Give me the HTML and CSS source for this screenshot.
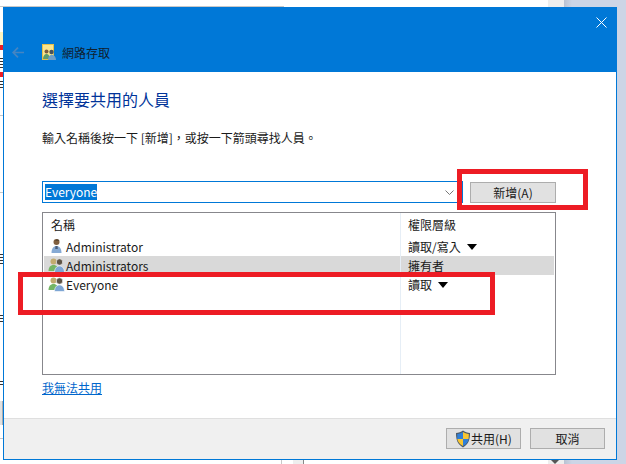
FILE: index.html
```html
<!DOCTYPE html>
<html lang="zh-Hant">
<head>
  <meta charset="UTF-8">
  <title>網路存取</title>
  <link rel="stylesheet" href="styles.css">
</head>
<body>
  <!-- bits of the window behind the dialog -->
  <div class="bg bg-topline"></div>
  <div class="bg bg-scroll"></div>
  <div class="bg bg-shadow"></div>
  <div class="bg bg-side"></div>
  <div class="bg bg-yellow"></div>
  <div class="bg bg-red-a"></div>
  <div class="bg bg-red-b"></div>
  <div class="bg bg-line-a"></div>
  <div class="bg bg-line-b"></div>
  <div class="bg bg-line-c"></div>
  <div class="bg bg-box"></div>
  <div class="bg bg-rule"></div>
  <div class="bg bg-cell"></div>
  <div class="bg bg-sliver sliver-a"></div>
  <div class="bg bg-sliver sliver-b"></div>
  <div class="bg bg-sliver sliver-c"></div>
  <div class="bg bg-sliver sliver-d"></div>
  <div class="bg bg-sliver sliver-e"></div>
  <svg class="bg-arrow" width="8" height="4" viewBox="0 0 8 4"><path d="M0 0h8L4 4z" fill="#555"/></svg>

  <div class="dialog">
    <header class="dialog-head">
      <div class="close-row">
        <svg width="11" height="11" viewBox="0 0 11 11"><path d="M.5.5l10 10M10.500.5l-10 10" stroke="#fff" fill="none"/></svg>
      </div>
      <div class="title-row">
        <svg class="back-icon" width="12" height="11" viewBox="0 0 12 11"><path d="M6 .7L1.200 5.500 6 10.300M1.500 5.500H12" stroke="#4585c2" stroke-width="1.700" fill="none"/></svg>
        <svg class="app-icon" width="14" height="16" viewBox="0 0 14 16">
          <rect x=".5" y=".5" width="11" height="15" fill="#fae58e" stroke="#e6c04a"/>
          <circle cx="4.500" cy="7.500" r="2" fill="#7c5b3e"/>
          <path d="M1 15c0-3 1.500-5 3.500-5S8 12 8 15z" fill="#5d9c6c"/>
          <circle cx="9.500" cy="8" r="2.200" fill="#47525e"/>
          <path d="M6 16c0-3 1.500-5.300 3.800-5.300S14 13 14 16z" fill="#6e9ec8"/>
        </svg>
        <span class="dialog-title">網路存取</span>
      </div>
    </header>

    <main class="dialog-body">
      <h1 class="heading">選擇要共用的人員</h1>
      <p class="hint">輸入名稱後按一下 [新增]，或按一下箭頭尋找人員。</p>

      <div class="add-row">
        <div class="combo">
          <span class="combo-value">Everyone</span>
          <svg width="9" height="5" viewBox="0 0 9 5"><path d="M.5.500l4 4 4-4" stroke="#777" fill="none"/></svg>
        </div>
        <button class="btn btn-add">新增(A)</button>
      </div>

      <div class="list">
        <div class="list-row list-head">
          <div class="col-name">名稱</div>
          <div class="col-perm">權限層級</div>
        </div>
        <div class="list-row">
          <div class="col-name">
            <svg class="user-icon" width="18" height="16" viewBox="0 0 18 16">
              <circle cx="8.500" cy="4" r="3" fill="#80603f"/>
              <path d="M7 2.500c1-1.500 3.500-1.500 4.500 0z" fill="#3d3226"/>
              <path d="M3.500 15c0-4.500 2.200-7 5-7s5 2.500 5 7z" fill="#86aad4"/>
              <path d="M7.500 8h2l.3 3h-2.600z" fill="#4a5d78"/>
            </svg>
            Administrator
          </div>
          <div class="col-perm">讀取/寫入<span class="caret"></span></div>
        </div>
        <div class="list-row is-selected">
          <div class="col-name">
            <svg class="user-icon" width="18" height="16" viewBox="0 0 18 16">
              <circle cx="5.500" cy="4.500" r="3" fill="#c2ab6e"/>
              <path d="M.5 14c0-3.700 2-6 5-6s5 2.300 5 6z" fill="#74b565"/>
              <circle cx="11.500" cy="5" r="3.200" fill="#5e5446" stroke="#fff" stroke-width=".6"/>
              <path d="M6.500 15.500c0-4 2.200-6.500 5-6.500s5 2.500 5 6.500z" fill="#7ea6d4" stroke="#fff" stroke-width=".6"/>
            </svg>
            Administrators
          </div>
          <div class="col-perm">擁有者</div>
        </div>
        <div class="list-row">
          <div class="col-name">
            <svg class="user-icon" width="18" height="16" viewBox="0 0 18 16">
              <circle cx="5.500" cy="4.500" r="3" fill="#c2ab6e"/>
              <path d="M.5 14c0-3.700 2-6 5-6s5 2.300 5 6z" fill="#74b565"/>
              <circle cx="11.500" cy="5" r="3.200" fill="#5e5446" stroke="#fff" stroke-width=".6"/>
              <path d="M6.500 15.500c0-4 2.200-6.500 5-6.500s5 2.500 5 6.500z" fill="#7ea6d4" stroke="#fff" stroke-width=".6"/>
            </svg>
            Everyone
          </div>
          <div class="col-perm">讀取<span class="caret"></span></div>
        </div>
        <div class="col-line"></div>
      </div>

      <a class="link" href="#">我無法共用</a>
    </main>

    <footer class="dialog-foot">
      <button class="btn btn-foot">
        <svg width="16" height="18" viewBox="0 0 16 18">
          <path d="M8 .5C6 2 3.500 3 1 3c0 6 1 11 7 14.500C14 14 15 9 15 3 12.500 3 10 2 8 .5z" fill="#4c5a68"/>
          <path d="M8 2v7H2.200c.1-1.800 0-3.400 0-5C4.500 3.800 6.300 3.100 8 2z" fill="#2f7fd8"/>
          <path d="M8 2c1.700 1.100 3.500 1.800 5.800 2 0 1.600 0 3.200-.2 5H8z" fill="#f7c531"/>
          <path d="M8 9H2.300c.5 2.800 2 4.900 5.700 7z" fill="#f7c531"/>
          <path d="M8 9h5.700c-.5 2.800-2 4.900-5.700 7z" fill="#2f7fd8"/>
        </svg>
        共用(H)
      </button>
      <button class="btn btn-foot">取消</button>
    </footer>
  </div>

  <div class="mark mark-add"></div>
  <div class="mark mark-row"></div>
</body>
</html>
```

FILE: styles.css
```css
html, body {
  margin: 0;
  padding: 0;
}

body {
  position: relative;
  width: 626px;
  height: 464px;
  overflow: hidden;
  background: #fff;
  font-family: "Noto Sans CJK TC", "Open Sans", sans-serif;
  font-size: 12px;
  color: #1a1a1a;
}

/* window behind the dialog */
.bg {
  position: absolute;
}

.bg-topline {
  left: 0;
  top: 6px;
  width: 284px;
  height: 1px;
  background: #c8c8c8;
}

.bg-scroll {
  left: 548px;
  top: 0;
  width: 16px;
  height: 464px;
  background: #eee;
}

.bg-shadow {
  left: 564px;
  top: 0;
  width: 8px;
  height: 464px;
  background: linear-gradient(to right, #b9c2d2, #ccd5e6);
}

.bg-side {
  left: 572px;
  top: 0;
  width: 54px;
  height: 464px;
  background: #ccd5e6;
}

.bg-yellow {
  left: 0;
  top: 32px;
  width: 3px;
  height: 13px;
  background: #fdf3c0;
}

.bg-red-a,
.bg-red-b {
  left: 0;
  width: 3px;
  height: 5px;
  background: #ed1c24;
}

.bg-red-a {
  top: 45px;
}

.bg-red-b {
  top: 72px;
}

.bg-line-a,
.bg-line-b,
.bg-line-c {
  left: 0;
  width: 3px;
  height: 1px;
  background: #c8c8c8;
}

.bg-line-a {
  top: 115px;
}

.bg-line-b {
  top: 192px;
}

.bg-line-c {
  top: 438px;
}

.bg-box {
  left: 0;
  top: 401px;
  width: 2px;
  height: 24px;
  background: #e1e1e1;
  border-right: 1px solid #adadad;
}

.bg-rule {
  left: 281px;
  top: 460px;
  width: 1px;
  height: 4px;
  background: #c8c8c8;
}

.bg-cell {
  left: 293px;
  top: 460px;
  width: 10px;
  height: 4px;
  background: #eee;
  border-right: 1px solid #888;
}

.bg-arrow {
  position: absolute;
  left: 551px;
  top: 460px;
}

/* cut-off writing of the window behind, too little shows to read it */
.bg-sliver {
  left: 0;
  width: 3px;
  background: repeating-linear-gradient(to bottom, #333 0, #333 1px, #fff 1px, #fff 3px);
}

.sliver-a {
  top: 58px;
  height: 12px;
}

.sliver-b {
  top: 81px;
  height: 7px;
}

.sliver-c {
  top: 254px;
  height: 11px;
}

.sliver-d {
  top: 315px;
  height: 9px;
}

.sliver-e {
  top: 381px;
  height: 6px;
}

/* dialog */
.dialog {
  position: absolute;
  left: 3px;
  top: 7px;
  width: 612px;
  height: 451px;
  display: flex;
  flex-direction: column;
  border: 1px solid #0078d7;
  background: #fff;
}

.dialog-head {
  height: 64px;
  background: #0078d7;
  flex-shrink: 0;
}

.close-row {
  display: flex;
  justify-content: flex-end;
  padding: 9px 9px 0 0;
  height: 19px;
}

.title-row {
  display: flex;
  align-items: center;
  height: 24px;
  margin-top: 4px;
  padding-left: 8px;
}

.back-icon {
  margin-right: 18px;
}

.app-icon {
  margin-right: 6px;
}

.dialog-title {
  font-size: 12px;
  color: #10202e;
}

.dialog-body {
  flex: 1;
  padding: 0 59px 0 38px;
  display: flex;
  flex-direction: column;
}

.heading {
  margin: 16px 0 0;
  font-size: 16px;
  font-weight: 400;
  line-height: 22px;
  color: #003399;
}

.hint {
  margin: 19px 0 0;
  line-height: 18px;
}

.add-row {
  display: flex;
  gap: 7px;
  margin-top: 34px;
}

.combo {
  box-sizing: border-box;
  width: 421px;
  height: 22px;
  display: flex;
  align-items: center;
  justify-content: space-between;
  padding: 0 8px 0 2px;
  border: 1px solid #0078d7;
}

.combo-value {
  background: #0078d7;
  color: #fff;
  line-height: 16px;
}

.btn {
  box-sizing: border-box;
  height: 21px;
  padding: 0;
  border: 1px solid #adadad;
  background: #e1e1e1;
  font-family: inherit;
  font-size: 12px;
  color: #1a1a1a;
}

.btn-add {
  width: 86px;
  margin-top: 1px;
}

.list {
  position: relative;
  box-sizing: border-box;
  width: 514px;
  height: 163px;
  margin-top: 9px;
  padding: 1px;
  border: 1px solid #87878c;
}

.list-row {
  box-sizing: border-box;
  display: flex;
  height: 19px;
  padding-bottom: 1px;
  align-items: center;
}

.list-head {
  height: 23px;
  padding-bottom: 2px;
}

.list-head .col-name {
  padding-left: 7px;
}

.is-selected {
  background: #d9d9d9;
}

.col-name {
  width: 356px;
  padding-left: 4px;
  display: flex;
  align-items: center;
  box-sizing: border-box;
  flex-shrink: 0;
}

.col-perm {
  padding-left: 8px;
}

.col-line {
  position: absolute;
  left: 357px;
  top: 0;
  bottom: 0;
  width: 1px;
  background: #e6eef6;
}

.caret {
  display: inline-block;
  margin-left: 6px;
  vertical-align: 2px;
  border-left: 5px solid transparent;
  border-right: 5px solid transparent;
  border-top: 6px solid #000;
}

.link {
  margin-top: 4px;
  align-self: flex-start;
  color: #0066cc;
}

.dialog-foot {
  height: 41px;
  flex-shrink: 0;
  box-sizing: border-box;
  border-top: 1px solid #dfdfdf;
  background: #f0f0f0;
  display: flex;
  justify-content: flex-end;
  gap: 9px;
  padding: 9px 11px 0 0;
}

.btn-foot {
  width: 75px;
  display: flex;
  align-items: center;
  justify-content: center;
}

/* red callouts drawn over the screenshot */
.mark {
  position: absolute;
  box-sizing: border-box;
  border: 5px solid #ed1c24;
}

.mark-add {
  left: 457px;
  top: 169px;
  width: 131px;
  height: 41px;
}

.mark-row {
  left: 18px;
  top: 272px;
  width: 477px;
  height: 43px;
}
```
